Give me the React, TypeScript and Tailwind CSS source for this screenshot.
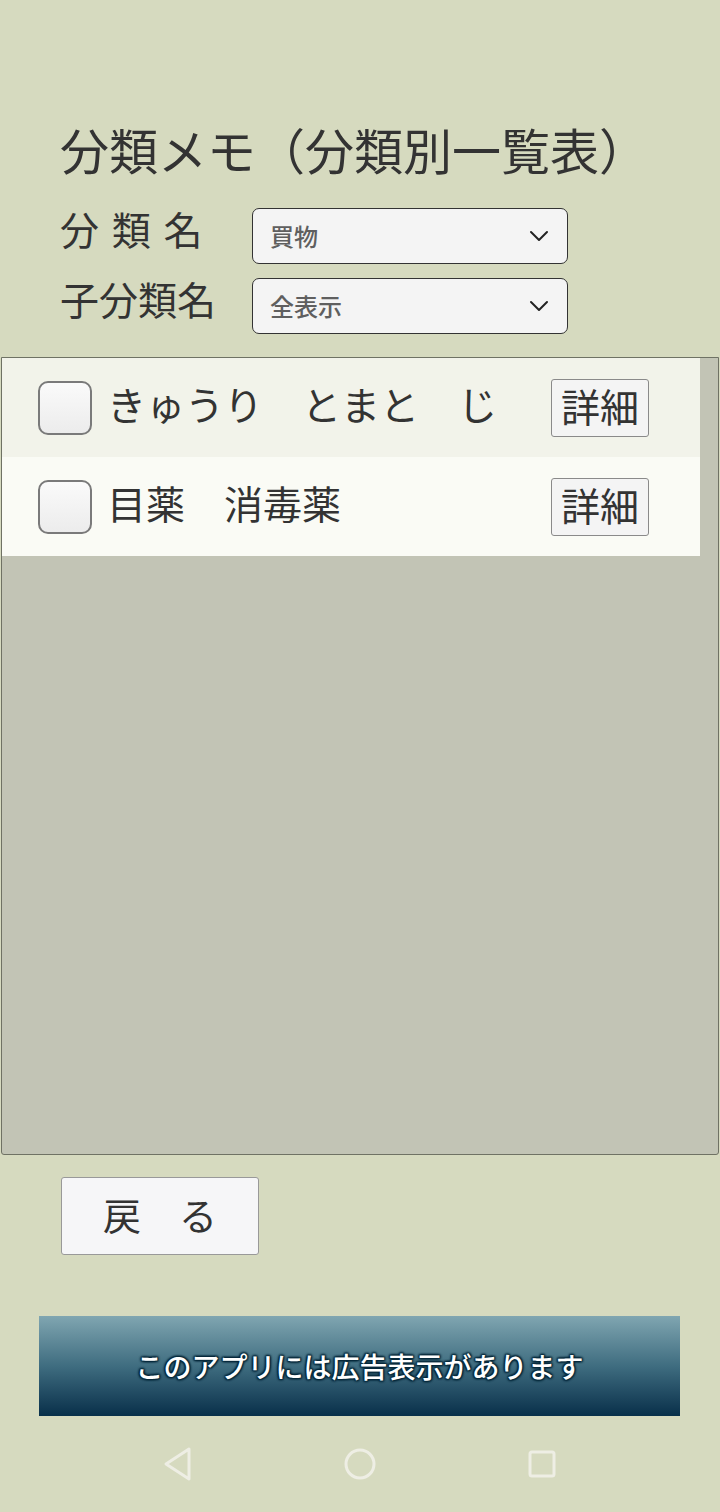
import React from "react";

const font = { fontFamily: '"Noto Sans CJK JP", "Noto Sans", sans-serif' };

function Chevron() {
  return (
    <svg width="20" height="12" viewBox="0 0 20 12" fill="none">
      <path d="M2 2 L10 10 L18 2" stroke="#222" strokeWidth="2" strokeLinecap="round" strokeLinejoin="round" />
    </svg>
  );
}

function Select({ value }: { value: string }) {
  return (
    <div className="flex h-[56px] w-[316px] items-center justify-between rounded-[7px] border border-[#333] bg-[#f4f4f4] pl-[17px] pr-[18px]">
      <span className="text-[24px] font-medium leading-none text-[#5f5f5f]">{value}</span>
      <Chevron />
    </div>
  );
}

function Row({ text, bg }: { text: string; bg: string }) {
  return (
    <div className={`flex h-[99px] items-center pl-[36px] ${bg}`}>
      <div className="h-[54px] w-[54px] rounded-[10px] border-2 border-[#7a7a7a] bg-gradient-to-b from-[#fafafa] to-[#ececec]" />
      <div className="mb-[8px] ml-[15px] w-[392px] whitespace-nowrap text-[39px] leading-none text-[#333]">{text}</div>
      <div className="ml-[52px] flex h-[58px] w-[98px] items-center justify-center rounded-[3px] border border-[#8a8a8a] bg-[#f4f4f4] pb-[4px] text-[39px] leading-none text-[#333]">
        詳細
      </div>
    </div>
  );
}

export default function App() {
  return (
    <div style={font} className="flex h-[1512px] w-[720px] flex-col bg-[#d6dabf] text-[#333]">
      <div className="pl-[60px] pt-[116px]">
        <div className="text-[49px] leading-[66px] text-[#333]">分類メモ（分類別一覧表）</div>
        <div className="mt-[26px] flex items-center">
          <div className="mb-[16px] w-[192px] text-[39px] leading-none tracking-[2px]">分 類 名</div>
          <Select value="買物" />
        </div>
        <div className="mt-[14px] flex items-center">
          <div className="mb-[16px] w-[192px] text-[39px] leading-none">子分類名</div>
          <Select value="全表示" />
        </div>
      </div>
      <div className="mx-[1px] mt-[23px] h-[798px] rounded-b-[3px] border border-[#6f7264] bg-[#c2c4b5]">
        <div className="w-[698px]">
          <Row text="きゅうり　とまと　じ" bg="bg-[#f2f3ea]" />
          <Row text="目薬　消毒薬" bg="bg-[#fafbf5]" />
        </div>
      </div>
      <div className="ml-[61px] mt-[22px] flex h-[78px] w-[198px] items-center justify-center rounded-[3px] border border-[#999] bg-[#f6f6f8] pb-[4px] text-[38px] leading-none text-[#333]">
        戻　る
      </div>
      <div className="ml-[39px] mt-[61px] flex h-[100px] w-[641px] items-center justify-center bg-gradient-to-b from-[#80a6b1] via-[#3f6d80] to-[#08304a]">
        <span
          className="text-[28px] font-medium leading-none text-white"
          style={{ textShadow: "0 0 2px #06283a, 0 0 3px #06283a, 1px 1px 2px #06283a, -1px -1px 2px #06283a, 1px -1px 2px #06283a, -1px 1px 2px #06283a" }}
        >
          このアプリには広告表示があります
        </span>
      </div>
      <div className="flex flex-1 items-center justify-center gap-[150px] pr-[2px]">
        <svg width="32" height="36" viewBox="0 0 32 36" fill="none">
          <path d="M28 3 L5 18 L28 33 Z" stroke="#eeeee4" strokeWidth="3" strokeLinejoin="round" />
        </svg>
        <svg width="34" height="34" viewBox="0 0 34 34" fill="none">
          <circle cx="17" cy="17" r="14" stroke="#eeeee4" strokeWidth="3" />
        </svg>
        <svg width="30" height="30" viewBox="0 0 30 30" fill="none">
          <rect x="3" y="3" width="24" height="24" rx="2" stroke="#eeeee4" strokeWidth="3" />
        </svg>
      </div>
    </div>
  );
}
